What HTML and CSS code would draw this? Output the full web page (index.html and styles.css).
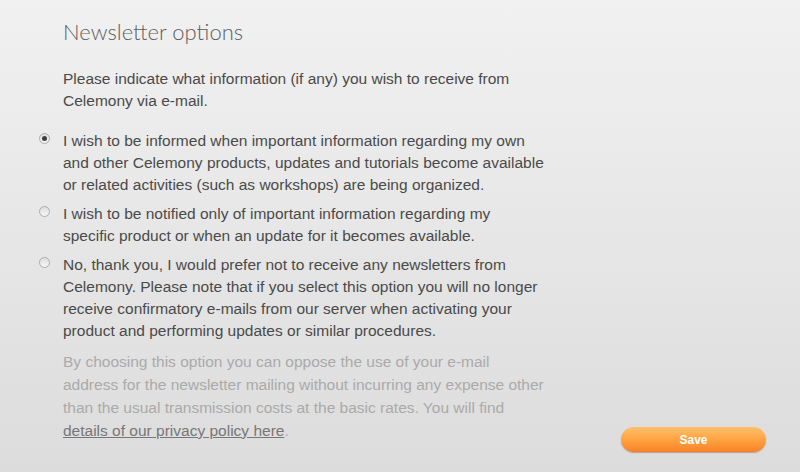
FILE: index.html
```html
<!DOCTYPE html>
<html>
<head>
<meta charset="utf-8">
<link rel="stylesheet" href="styles.css">
</head>
<body>
<div class="page">
  <div class="content">
    <h1 class="title">Newsletter options</h1>
    <p class="intro">Please indicate what information (if any) you wish to receive from Celemony via e-mail.</p>
    <div class="options">
      <label class="option">
        <span class="radio checked"></span>
        <span class="opt-text">I wish to be informed when important information regarding my own and other Celemony products, updates and tutorials become available or related activities (such as workshops) are being organized.</span>
      </label>
      <label class="option">
        <span class="radio"></span>
        <span class="opt-text">I wish to be notified only of important information regarding my specific product or when an update for it becomes available.</span>
      </label>
      <label class="option">
        <span class="radio"></span>
        <span class="opt-text">No, thank you, I would prefer not to receive any newsletters from Celemony. Please note that if you select this option you will no longer receive confirmatory e-mails from our server when activating your product and performing updates or similar procedures.</span>
      </label>
    </div>
    <p class="note">By choosing this option you can oppose the use of your e-mail address for the newsletter mailing without incurring any expense other than the usual transmission costs at the basic rates. You will find <a href="#" class="link">details of our privacy policy here</a>.</p>
  </div>
  <div class="actions">
    <button class="save">Save</button>
  </div>
</div>
</body>
</html>
```

FILE: styles.css
```css
html, body {
  margin: 0;
  padding: 0;
  height: 100%;
}
body {
  background: linear-gradient(to bottom, #f1f1f1 0%, #dcdcdc 100%);
  font-family: "Liberation Sans", Arial, sans-serif;
  color: #4a4a4a;
  font-size: 15.5px;
  line-height: 22px;
  overflow: hidden;
}
.page {
  width: 800px;
  height: 472px;
  position: relative;
  box-sizing: border-box;
  padding: 18px 0 0 63px;
}
.content {
  width: 482px;
}
.title {
  margin: 0 0 22px 0;
  font-family: "Lato", "Liberation Sans", sans-serif;
  font-weight: 300;
  font-size: 22px;
  line-height: 28px;
  color: #5e5e5e;
}
.intro {
  margin: 0 0 18px 0;
}
.options {
  display: flex;
  flex-direction: column;
  gap: 7px;
  margin-left: -24px;
  margin-right: -24px;
}
.option {
  display: flex;
  gap: 13px;
  align-items: flex-start;
}
.radio {
  flex: none;
  width: 9px;
  height: 9px;
  margin-top: 3px;
  border: 1px solid #adadad;
  border-radius: 50%;
  background: linear-gradient(#dedede, #f6f6f6);
  position: relative;
}
.radio.checked::after {
  content: "";
  position: absolute;
  left: 2px;
  top: 2px;
  width: 5px;
  height: 5px;
  border-radius: 50%;
  background: #3e3e3e;
}
.opt-text {
  display: block;
  width: 482px;
}
.note {
  margin: 8px 0 0 0;
  line-height: 23px;
  color: #aaaaaa;
}
.link {
  color: #777;
  text-decoration: underline;
}
.actions {
  position: absolute;
  left: 621px;
  top: 427px;
}
.save {
  width: 145px;
  height: 25px;
  border: none;
  border-radius: 13px;
  background: linear-gradient(to bottom, #ffc06a 0%, #ff9d3a 60%, #f5812a 100%);
  box-shadow: 0 1px 1px rgba(160, 80, 20, 0.45);
  color: #fff;
  font-family: "Liberation Sans", Arial, sans-serif;
  font-weight: bold;
  font-size: 12px;
  padding: 0;
}
```
